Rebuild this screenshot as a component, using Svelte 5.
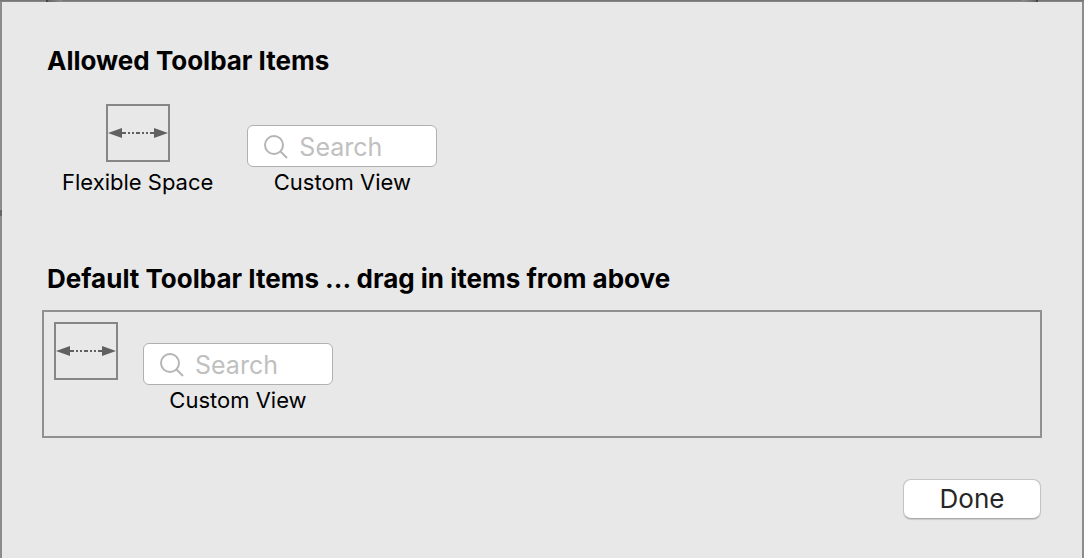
<script>
  let allowedQuery = $state('');
  let defaultQuery = $state('');
</script>

{#snippet flexibleSpace()}
  <svg class="space" viewBox="0 0 64 58" aria-hidden="true">
    <rect x="1" y="1" width="62" height="56" fill="none" stroke="#868686" stroke-width="2" />
    <path d="M2 29 16 24V34ZM62 29 48 24V34Z" fill="#606060" />
    <path d="M16 29H20M22 29H24M26 29H28M30 29H34M36 29H38M40 29H42M44 29H48" stroke="#606060" stroke-width="2" />
  </svg>
{/snippet}

{#snippet glass()}
  <svg class="glass" viewBox="0 0 24 24" fill="none" stroke="#b5b5b5" stroke-width="2" aria-hidden="true">
    <circle cx="10" cy="10" r="9" />
    <path d="M16 16 23 23" />
  </svg>
{/snippet}

<main class="sheet">
  <div class="backdrop" aria-hidden="true"></div>
  <section>
    <h2>Allowed Toolbar Items</h2>
    <div class="items allowed">
      <div class="item">
        {@render flexibleSpace()}
        <span class="label">Flexible Space</span>
      </div>
      <div class="item">
        <div class="search">
          {@render glass()}
          <input id="allowed-search" type="text" placeholder="Search" bind:value={allowedQuery} />
        </div>
        <label class="label" for="allowed-search">Custom View</label>
      </div>
    </div>
  </section>

  <section class="defaults">
    <h2>Default Toolbar Items ... drag in items from above</h2>
    <div class="items well">
      <div class="item">
        {@render flexibleSpace()}
      </div>
      <div class="item">
        <div class="search">
          {@render glass()}
          <input id="default-search" type="text" placeholder="Search" bind:value={defaultQuery} />
        </div>
        <label class="label" for="default-search">Custom View</label>
      </div>
    </div>
  </section>

  <footer>
    <button type="button">Done</button>
  </footer>
</main>

<style>
  :global(body) {
    margin: 0;
    background: #e8e8e8;
  }

  .sheet {
    position: relative;
    box-sizing: border-box;
    min-height: 100vh;
    padding: 40px 40px 36px;
    border: 2px solid #8c8c8c;
    border-bottom: 0;
    background: #e8e8e8;
    color: #000;
    font-family: Inter, "Liberation Sans", sans-serif;
  }

  /* Edges of the window behind the sheet */
  .backdrop {
    position: absolute;
    inset: -2px -2px auto;
    height: 2px;
    background:
      linear-gradient(#444, #444) 46px 0 / 2px 2px no-repeat,
      linear-gradient(90deg, #666, #8c8c8c) 48px 0 / 14px 2px no-repeat,
      linear-gradient(#444, #444) calc(100% - 46px) 0 / 2px 2px no-repeat,
      linear-gradient(90deg, #8c8c8c, #666) calc(100% - 48px) 0 / 14px 2px no-repeat,
      linear-gradient(#707070, #8c8c8c);
  }

  .backdrop::after {
    content: "";
    position: absolute;
    top: 210px;
    left: 0;
    width: 2px;
    height: 6px;
    background: #666;
  }

  h2 {
    margin: 0;
    padding-left: 5px;
    font-size: 26px;
    line-height: 38px;
    font-weight: 700;
  }

  .items {
    display: flex;
    align-items: flex-end;
  }

  .allowed {
    gap: 34px;
    padding: 24px 20px 0;
  }

  .item {
    display: flex;
    flex-direction: column;
    align-items: center;
  }

  .space {
    display: block;
    width: 64px;
    height: 58px;
  }

  .allowed .space {
    margin-bottom: 5px;
  }

  .label {
    font-size: 22px;
    line-height: 30px;
  }

  .search {
    display: flex;
    align-items: center;
    box-sizing: border-box;
    width: 190px;
    height: 42px;
    padding: 2px 16px 0;
    gap: 11px;
    border: 1px solid #b0b0b0;
    border-radius: 6px;
    background: #fff;
  }

  .glass {
    flex: none;
    width: 24px;
    height: 24px;
  }

  input {
    flex: 1;
    min-width: 0;
    padding: 0;
    border: 0;
    outline: 0;
    background: none;
    color: #000;
    font: inherit;
    font-size: 25px;
    line-height: 38px;
  }

  input::placeholder {
    color: #c0c0c0;
    opacity: 1;
  }

  .defaults {
    margin-top: 63px;
  }

  .well {
    align-items: flex-start;
    gap: 25px;
    margin-top: 12px;
    padding: 10px 10px 21px;
    border: 2px solid #909090;
  }

  .well .search {
    margin-top: 21px;
  }

  footer {
    display: flex;
    justify-content: flex-end;
    margin-top: 41px;
    padding-right: 1px;
  }

  button {
    width: 138px;
    height: 40px;
    padding: 0;
    border: 1px solid #c4c4c4;
    border-bottom-color: #aaa;
    border-radius: 8px;
    background: #fff;
    box-shadow: 0 1px 1px #0002;
    color: #262626;
    font: inherit;
    font-size: 26px;
    line-height: 38px;
  }
</style>
